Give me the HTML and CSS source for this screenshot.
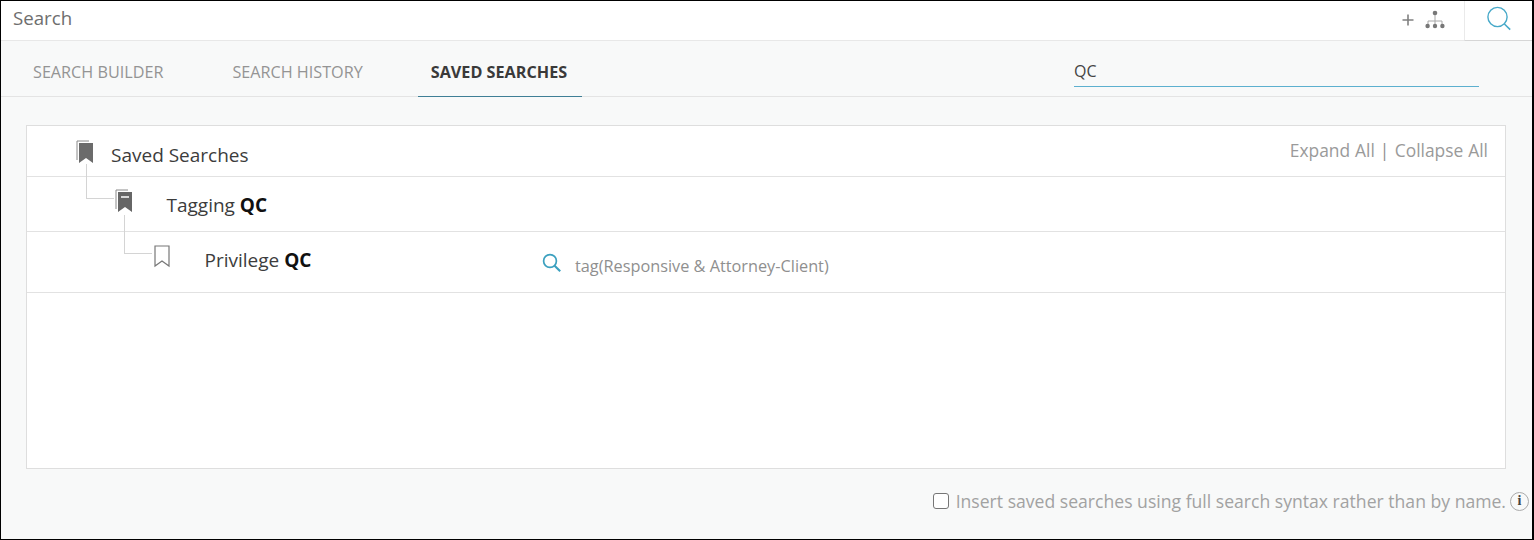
FILE: index.html
```html
<!DOCTYPE html>
<html lang="en">
<head>
<meta charset="utf-8">
<title>Search</title>
<link rel="stylesheet" href="styles.css">
</head>
<body>
<div class="frame">
  <header class="topbar">
    <div class="title">Search</div>
    <div class="tools">
      <svg class="plus" width="12" height="12" viewBox="0 0 12 12"><path d="M6 .5v11M.5 6h11" stroke="#808080" stroke-width="1.6" fill="none"/></svg>
      <svg class="org" width="20" height="20" viewBox="0 0 20 20"><path d="M10 3v12M3 15v-4h14v4" stroke="#a8a8a8" stroke-width="1" fill="none"/><circle cx="10" cy="3" r="2.3" fill="#777"/><circle cx="2.6" cy="16" r="2.2" fill="#777"/><circle cx="10" cy="16" r="2.2" fill="#777"/><circle cx="17.4" cy="16" r="2.2" fill="#777"/></svg>
    </div>
    <div class="searchbtn">
      <svg width="26" height="26" viewBox="0 0 26 26"><circle cx="11.5" cy="11" r="9.6" stroke="#47a9c9" stroke-width="1.4" fill="none"/><path d="M18.4 18l5.8 5.6" stroke="#47a9c9" stroke-width="1.6" fill="none"/></svg>
    </div>
  </header>
  <nav class="tabs">
    <a class="tab tab-one">SEARCH BUILDER</a>
    <a class="tab tab-two">SEARCH HISTORY</a>
    <a class="tab active">SAVED SEARCHES</a>
    <div class="filter">QC</div>
  </nav>
  <main class="content">
    <section class="card">
      <div class="row row-root">
        <svg class="bm bm-root" width="18" height="24" viewBox="0 0 18 24"><path d="M1 20V1h12" stroke="#8a8a8a" stroke-width="1" fill="none"/><path d="M3 3h14v20l-7-5-7 5z" fill="#6b6b6b"/></svg>
        <span class="name name-root">Saved Searches</span>
        <div class="links">Expand All <span class="sep">|</span> Collapse All</div>
      </div>
      <div class="row row-tag">
        <i class="line line-a"></i>
        <svg class="bm bm-tag" width="18" height="24" viewBox="0 0 18 24"><path d="M1 20V1h12" stroke="#8a8a8a" stroke-width="1" fill="none"/><path d="M3 3h14v20l-7-5-7 5z" fill="#666"/><path d="M6 8h8" stroke="#fff" stroke-width="1.5"/></svg>
        <span class="name name-tag">Tagging <b>QC</b></span>
      </div>
      <div class="row row-priv">
        <i class="line line-b"></i>
        <svg class="bm bm-priv" width="16" height="23" viewBox="0 0 16 23"><path d="M1 1h14v20l-7-5-7 5z" stroke="#777" stroke-width="1.2" fill="#fff"/></svg>
        <span class="name name-priv">Privilege <b>QC</b></span>
        <svg class="mag" width="20" height="20" viewBox="0 0 20 20"><circle cx="8" cy="8" r="6.4" stroke="#3ba0bf" stroke-width="1.7" fill="none"/><path d="M12.6 12.8l5.6 5.4" stroke="#3ba0bf" stroke-width="2.2" fill="none"/></svg>
        <span class="query">tag(Responsive &amp; Attorney-Client)</span>
      </div>
    </section>
    <footer class="option">
      <span class="check"></span>
      <span class="opt-text">Insert saved searches using full search syntax rather than by name.</span>
      <span class="info">i</span>
    </footer>
  </main>
</div>
</body>
</html>
```
FILE: styles.css
```css
* { box-sizing: border-box; }
html, body { margin: 0; height: 100%; }
body {
  width: 1534px;
  height: 540px;
  overflow: hidden;
  font-family: "Open Sans", "Liberation Sans", sans-serif;
}
.frame {
  height: 540px;
  border: 1px solid #000;
  border-right-width: 2px;
  background: #f8f9f9;
  display: flex;
  flex-direction: column;
}
.topbar {
  height: 40px;
  background: #fff;
  display: flex;
  align-items: center;
  border-bottom: 1px solid #e8e8e8;
  flex: none;
}
.title {
  font-size: 18.7px;
  color: #6e6e6e;
  margin-left: 12px;
  margin-top: -7px;
  flex: 1;
}
.tools { display: flex; align-items: center; gap: 11px; margin-right: 19px; margin-top: -1px; }
.org { margin-top: -1px; }
.searchbtn {
  width: 68px;
  height: 40px;
  border-left: 1px solid #eaeaea;
  border-bottom: 1px solid #d6d6d6;
  padding: 5px 0 0 21px;
  background: #fff;
  margin-bottom: -1px;
}
.searchbtn svg { display: block; }
.tabs {
  height: 56px;
  border-bottom: 1px solid #e4e4e4;
  display: flex;
  flex: none;
}
.tab {
  font-size: 16.2px;
  color: #949494;
  padding: 20px 13px 0;
  height: 56px;
  white-space: nowrap;
}
.tab-one { margin-left: 19px; }
.tab-two { margin-left: 43px; }
.tab.active {
  margin-left: 42px;
  color: #3a3a3a;
  font-weight: 700;
  border-bottom: 1.5px solid #3f7f96;
  padding: 20px 15px 0 13px;
}
.filter {
  position: absolute;
  left: 1074px;
  top: 60px;
  width: 405px;
  height: 27px;
  font-size: 16px;
  color: #444;
  border-bottom: 1px solid #5db0cf;
}
.content { flex: 1; padding: 28px 26px 0 25px; }
.card {
  height: 344px;
  background: #fff;
  border: 1px solid #dedede;
}
.row {
  position: relative;
  border-bottom: 1px solid #e2e2e2;
  color: #3c3c3c;
}
.row-root { height: 50.5px; }
.row-tag { height: 55px; }
.row-priv { height: 61px; }
.bm { position: absolute; display: block; }
.bm-root { left: 49px; top: 14px; }
.bm-tag { left: 88px; top: 12px; }
.bm-priv { left: 127px; top: 13px; }
.name { position: absolute; font-size: 19px; white-space: nowrap; }
.name b { color: #111; font-weight: 700; }
.name-root { left: 84px; top: 16px; }
.name-tag { left: 139.5px; top: 15px; }
.name-priv { left: 177.5px; top: 15px; }
.links {
  position: absolute;
  right: 17px;
  top: 12px;
  font-size: 17.4px;
  color: #9a9a9a;
  word-spacing: 0.4px;
}
.sep { color: #8f8f8f; padding: 0 0.5px 0 0; }
.line {
  position: absolute;
  border-left: 1px solid #d4d4d4;
  border-bottom: 1px solid #d4d4d4;
}
.line-a { left: 59px; top: -13px; width: 28px; height: 35px; }
.line-b { left: 97px; top: -17px; width: 28px; height: 39px; }
.mag { position: absolute; left: 515px; top: 21px; }
.query {
  position: absolute;
  left: 548px;
  top: 23px;
  font-size: 16.3px;
  color: #8f8f8f;
  white-space: nowrap;
}
.option {
  display: flex;
  justify-content: flex-end;
  align-items: center;
  margin-top: 21px;
  margin-right: -23px;
  height: 22px;
  font-size: 17.6px;
  color: #a2a2a2;
  white-space: nowrap;
}
.check {
  width: 16px;
  height: 16px;
  border: 1.5px solid #767676;
  border-radius: 3px;
  background: #fff;
  margin-right: 7px;
}
.info {
  width: 19px;
  height: 19px;
  margin-left: 4px;
  border: 1.5px solid #aaa;
  border-radius: 50%;
  font: 700 14px/16px "Liberation Serif", serif;
  color: #444;
  text-align: center;
}
```
